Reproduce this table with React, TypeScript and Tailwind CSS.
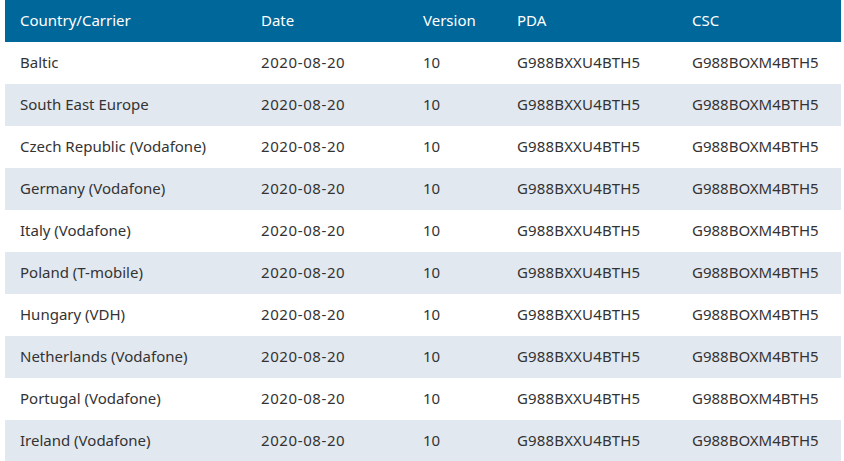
const rows = [
  "Baltic",
  "South East Europe",
  "Czech Republic (Vodafone)",
  "Germany (Vodafone)",
  "Italy (Vodafone)",
  "Poland (T-mobile)",
  "Hungary (VDH)",
  "Netherlands (Vodafone)",
  "Portugal (Vodafone)",
  "Ireland (Vodafone)",
];

const cols = ["w-[241px]", "w-[162px]", "w-[94px]", "w-[175px]", "w-[164px]"];

export default function App() {
  return (
    <div className="bg-white min-h-screen pl-[5px] pr-[3px]" style={{ fontFamily: '"Noto Sans", sans-serif' }}>
      <table className="w-[836px] border-collapse table-fixed text-[15px]">
        <thead>
          <tr className="bg-[#00679b] text-white h-[42px]">
            {["Country/Carrier", "Date", "Version", "PDA", "CSC"].map((h, i) => (
              <th key={h} className={`${cols[i]} text-left font-normal pl-[15px] pb-px`}>
                {h}
              </th>
            ))}
          </tr>
        </thead>
        <tbody className="text-[#333]">
          {rows.map((r, i) => (
            <tr key={r} className={`h-[42px] ${i % 2 === 1 ? "bg-[#e2e8ef]" : "bg-white"}`}>
              <td className="pl-[15px] pb-px">{r}</td>
              <td className="pl-[15px] pb-px tracking-[0.6px]">2020-08-20</td>
              <td className="pl-[15px] pb-px">10</td>
              <td className="pl-[15px] pb-px tracking-[0.15px]">G988BXXU4BTH5</td>
              <td className="pl-[15px] pb-px">G988BOXM4BTH5</td>
            </tr>
          ))}
        </tbody>
      </table>
    </div>
  );
}
